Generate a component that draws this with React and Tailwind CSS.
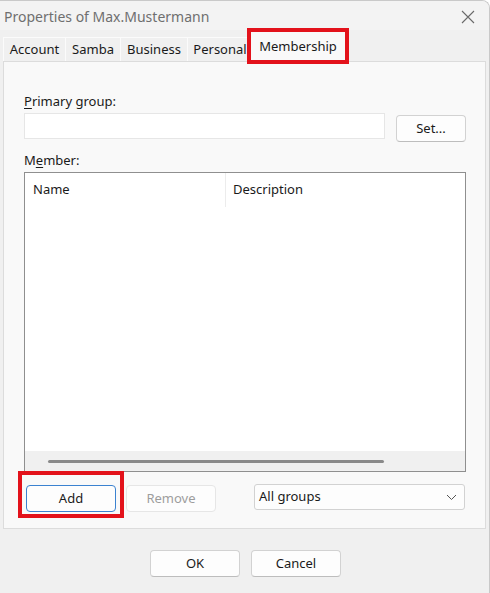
const tabs = [
    { label: "Account", w: "w-[62px]" },
    { label: "Samba", w: "w-[55px]" },
    { label: "Business", w: "w-[67px]" },
    { label: "Personal", w: "w-[65px]" },
];

const WinButton = ({ children, className = "", w = "w-[90px]", disabled = false, focused = false }) => {
    return (
        <button
            className={
                "h-[27px] shrink-0 rounded-[4px] border bg-[#fdfdfd] text-[13px] leading-none " +
                w +
                " " +
                (focused
                    ? "border-[#3b82d0] text-[#1a1a1a] "
                    : disabled
                    ? "border-[#e6e6e6] bg-[#f9f9f9] text-[#9d9d9d] "
                    : "border-[#d2d2d2] border-b-[#bdbdbd] text-[#1a1a1a] ") +
                className
            }
        >
            {children}
        </button>
    );
};

const App = () => {
    return (
        <div className="bg-white w-[490px] h-[593px]">
            <div
                className="relative w-[490px] h-[593px] overflow-hidden rounded-tr-[8px] border-t border-r border-[#c9c9c9] bg-[#f0f0f0] text-[#1a1a1a] flex flex-col"
                style={{ fontFamily: '"Noto Sans", "Open Sans", sans-serif' }}
            >
                {/* title bar */}
                <div className="h-[29px] flex items-center justify-between bg-[#f3f3f3] pl-[4px] pr-[14px]">
                    <span className="text-[14px] text-[#6f6f6f] mt-[2px]">Properties of Max.Mustermann</span>
                    <svg width="14" height="14" viewBox="0 0 14 14" className="mt-[3px]">
                        <path d="M1 1L13 13M13 1L1 13" stroke="#6a6a6a" strokeWidth="1.1" fill="none" />
                    </svg>
                </div>

                {/* tabs */}
                <div className="relative h-[31px] flex items-end pl-[3px]">
                    {tabs.map((t) => (
                        <div
                            key={t.label}
                            className={
                                t.w +
                                " h-[24px] flex items-center justify-center bg-[#f0f0f0] border-l border-t border-[#fbfbfb] text-[13px]"
                            }
                        >
                            {t.label}
                        </div>
                    ))}
                    <div className="w-[96px] h-[30px] -ml-[2px] flex items-center justify-center bg-[#f9f9f9] text-[13px] pt-[2px]">
                        Membership
                    </div>
                    <div className="absolute left-[247px] top-[-2px] w-[102px] h-[36px] border-[4px] border-[#e3121b] z-10" />
                </div>

                {/* panel */}
                <div className="mx-[3px] h-[468px] border border-[#dcdcdc] bg-[#f9f9f9] px-[20px] pt-[31px]">
                    <div className="text-[13px] leading-[16px]">
                        <span className="underline underline-offset-2">P</span>rimary group:
                    </div>
                    <div className="flex items-start mt-[4px]">
                        <div className="w-[361px] h-[26px] shrink-0 bg-white border border-[#e6e6e6]" />
                        <WinButton w="w-[70px]" className="ml-[11px] mt-[2px]">Set...</WinButton>
                    </div>
                    <div className="text-[13px] leading-[16px] mt-[10px]">
                        M<span className="underline underline-offset-2">e</span>mber:
                    </div>
                    <div className="mt-[4px] w-[442px] h-[300px] border border-[#8f8f8f] bg-white flex flex-col">
                        <div className="flex h-[34px] items-center text-[13px]">
                            <div className="w-[201px] pl-[8px] h-full flex items-center border-r border-[#ececec]">Name</div>
                            <div className="pl-[7px]">Description</div>
                        </div>
                        <div className="flex-1" />
                        <div className="h-[20px] bg-[#f0f0f0] flex items-center pl-[23px]">
                            <div className="w-[336px] h-[3px] rounded-full bg-[#8a8a8a]" />
                        </div>
                    </div>
                    <div className="relative flex items-start mt-[12px]">
                        <WinButton focused className="ml-[2px] mt-[1px]">Add</WinButton>
                        <WinButton disabled className="ml-[10px] mt-[1px]">Remove</WinButton>
                        <div className="ml-[38px] w-[211px] h-[26px] rounded-[3px] border border-[#d2d2d2] bg-[#fdfdfd] flex items-center justify-between pl-[4px] pr-[7px] text-[13px]">
                            <span>All groups</span>
                            <svg width="11" height="7" viewBox="0 0 11 7">
                                <path d="M1 1L5.5 5.5L10 1" stroke="#555" strokeWidth="1" fill="none" />
                            </svg>
                        </div>
                        <div className="absolute left-[-6px] top-[-13px] w-[106px] h-[47px] border-[4px] border-[#e3121b]" />
                    </div>
                </div>

                {/* bottom buttons */}
                <div className="flex justify-center gap-[11px] pt-[21px] pl-[2px]">
                    <WinButton>OK</WinButton>
                    <WinButton>Cancel</WinButton>
                </div>
            </div>
        </div>
    );
};

export default App;
